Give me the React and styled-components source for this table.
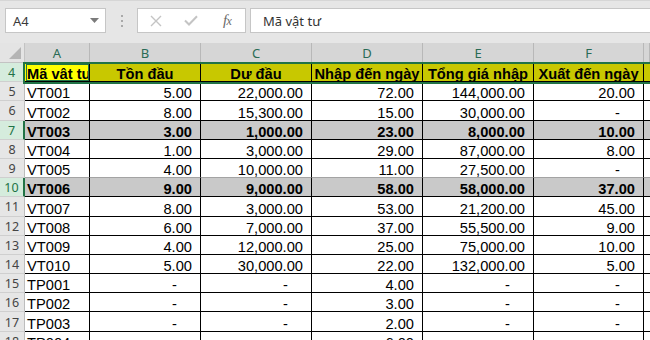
import React from 'react';
import styled, { createGlobalStyle } from 'styled-components';

const GREEN = '#217346';
const COLS = '25px 65px 111px 111px 111px 111px 110px 1fr';

const GlobalStyle = createGlobalStyle`
  html, body { margin: 0; padding: 0; background: #fff; overflow: hidden; }
  #root { width: 650px; height: 340px; overflow: hidden; }
`;

const Window = styled.div`
  width: 650px;
  height: 340px;
  overflow: hidden;
  display: flex;
  flex-direction: column;
  background: #fff;
`;

const FormulaBar = styled.div`
  height: 43px;
  flex: none;
  box-sizing: border-box;
  background: #e6e6e6;
  border-top: 1px solid #d6d6d6;
  display: flex;
  align-items: flex-start;
  padding: 7px 0 0 5px;
  font-family: "Noto Sans", "Open Sans", sans-serif;
`;

const NameBox = styled.div`
  width: 101px;
  height: 25px;
  box-sizing: border-box;
  border: 1px solid #c6c6c6;
  background: #fff;
  display: flex;
  align-items: center;
  justify-content: space-between;
  padding: 0 6px 0 7px;
  font-size: 13px;
  color: #3a3a3a;
`;

const Grip = styled.div`
  width: 31px;
  height: 25px;
  display: flex;
  flex-direction: column;
  align-items: center;
  justify-content: center;
  gap: 3px;
`;

const Dot = styled.span`
  width: 2px;
  height: 2px;
  background: #a9a9a9;
`;

const FxBox = styled.div`
  width: 109px;
  height: 25px;
  box-sizing: border-box;
  border: 1px solid #c6c6c6;
  background: #fff;
  display: grid;
  grid-template-columns: repeat(3, 1fr);
  align-items: center;
  justify-items: center;
  margin-right: 4px;
`;

const FxLabel = styled.span`
  font-family: "Liberation Serif", serif;
  font-style: italic;
  font-size: 15px;
  color: #6a6a6a;
  letter-spacing: -0.5px;
  & small { font-size: 12px; }
`;

const FormulaInput = styled.div`
  flex: 1;
  height: 25px;
  box-sizing: border-box;
  border: 1px solid #c6c6c6;
  border-right: none;
  background: #fff;
  display: flex;
  align-items: center;
  padding-left: 12px;
  font-size: 13px;
  color: #333;
`;

const Sheet = styled.div`
  position: relative;
  flex: 1;
  overflow: hidden;
`;

const HeaderRow = styled.div`
  display: grid;
  grid-template-columns: ${COLS};
  height: 20px;
`;

const Corner = styled.div`
  position: relative;
  background: #e4e4e4;
  box-sizing: border-box;
  border-right: 1px solid #c3c3c3;
  border-bottom: 1px solid #c3c3c3;
`;

const CornerTriangle = styled.svg`
  position: absolute;
  right: 3px;
  bottom: 3px;
`;

const ColHeader = styled.div`
  background: #d6d6d6;
  box-sizing: border-box;
  border-right: 1px solid #b8b8b8;
  display: flex;
  align-items: center;
  justify-content: center;
  font-family: "Noto Sans", "Open Sans", sans-serif;
  font-size: 13px;
  color: #2a6b55;
  padding-bottom: 1px;
`;

const Row = styled.div`
  display: grid;
  grid-template-columns: ${COLS};
  height: 19.2px;
`;

const RowHeader = styled.div`
  box-sizing: border-box;
  background: ${(p) => (p.$selected ? '#d5ecdd' : '#e6e6e6')};
  color: ${(p) => (p.$selected ? GREEN : '#444')};
  border-bottom: 1px solid #cfcfcf;
  border-right: ${(p) => (p.$selected ? `2px solid ${GREEN}` : '1px solid #bdbdbd')};
  display: flex;
  align-items: center;
  justify-content: center;
  font-family: "Noto Sans", "Open Sans", sans-serif;
  font-size: 12.5px;
  padding-top: 1px;
`;

const Cell = styled.div`
  box-sizing: border-box;
  background: ${(p) => p.$bg || '#fff'};
  border-right: ${(p) => (p.$last ? 'none' : '1px solid #000')};
  border-bottom: 1px solid ${(p) => p.$bottom || '#000'};
  display: flex;
  align-items: flex-end;
  justify-content: ${(p) => (p.$align === 'left' ? 'flex-start' : p.$align === 'center' ? 'center' : 'flex-end')};
  padding: ${(p) =>
    p.$align === 'left' ? '0 0 0 2px' : p.$align === 'center' ? '0' : p.$dash ? '0 23px 0 0' : '0 8px 0 0'};
  font-family: "Liberation Sans", Arial, sans-serif;
  font-size: 14.67px;
  font-weight: ${(p) => (p.$bold ? 700 : 400)};
  line-height: 14px;
  color: #000;
  white-space: nowrap;
  overflow: hidden;
  outline: ${(p) => (p.$active ? `1px solid ${GREEN}` : 'none')};
  outline-offset: -2px;
`;

const Selection = styled.div`
  position: absolute;
  top: 19px;
  left: 23px;
  right: -4px;
  height: 22px;
  box-sizing: border-box;
  border: 2px solid ${GREEN};
  pointer-events: none;
`;

const headers = ['Mã vật tư', 'Tồn đầu', 'Dư đầu', 'Nhập đến ngày', 'Tổng giá nhập', 'Xuất đến ngày'];

const rows = [
  { n: 5, v: ['VT001', '5.00', '22,000.00', '72.00', '144,000.00', '20.00'] },
  { n: 6, v: ['VT002', '8.00', '15,300.00', '15.00', '30,000.00', '-'] },
  { n: 7, v: ['VT003', '3.00', '1,000.00', '23.00', '8,000.00', '10.00'], hl: true },
  { n: 8, v: ['VT004', '1.00', '3,000.00', '29.00', '87,000.00', '8.00'] },
  { n: 9, v: ['VT005', '4.00', '10,000.00', '11.00', '27,500.00', '-'], soft: true },
  { n: 10, v: ['VT006', '9.00', '9,000.00', '58.00', '58,000.00', '37.00'], hl: true },
  { n: 11, v: ['VT007', '8.00', '3,000.00', '53.00', '21,200.00', '45.00'] },
  { n: 12, v: ['VT008', '6.00', '7,000.00', '37.00', '55,500.00', '9.00'] },
  { n: 13, v: ['VT009', '4.00', '12,000.00', '25.00', '75,000.00', '10.00'] },
  { n: 14, v: ['VT010', '5.00', '30,000.00', '22.00', '132,000.00', '5.00'] },
  { n: 15, v: ['TP001', '-', '-', '4.00', '-', '-'] },
  { n: 16, v: ['TP002', '-', '-', '3.00', '-', '-'] },
  { n: 17, v: ['TP003', '-', '-', '2.00', '-', '-'] },
  { n: 18, v: ['TP004', '-', '-', '6.00', '-', '-'] },
];

const CancelIcon = () => (
  <svg width="12" height="12" viewBox="0 0 12 12">
    <path d="M1 1 L11 11 M11 1 L1 11" stroke="#c4c4c4" strokeWidth="1.4" fill="none" />
  </svg>
);

const CheckIcon = () => (
  <svg width="14" height="11" viewBox="0 0 14 11">
    <path d="M1 5.5 L5 9.5 L13 1.2" stroke="#c4c4c4" strokeWidth="2" fill="none" />
  </svg>
);

const Caret = () => (
  <svg width="9" height="5" viewBox="0 0 9 5">
    <path d="M0 0 H9 L4.5 5 Z" fill="#7b7b7b" />
  </svg>
);

export default function App() {
  return (
    <Window>
      <GlobalStyle />
      <FormulaBar>
        <NameBox>
          <span>A4</span>
          <Caret />
        </NameBox>
        <Grip>
          <Dot />
          <Dot />
          <Dot />
        </Grip>
        <FxBox>
          <CancelIcon />
          <CheckIcon />
          <FxLabel>
            f<small>x</small>
          </FxLabel>
        </FxBox>
        <FormulaInput>Mã vật tư</FormulaInput>
      </FormulaBar>
      <Sheet>
        <HeaderRow>
          <Corner>
            <CornerTriangle width="12" height="12" viewBox="0 0 12 12">
              <path d="M12 0 V12 H0 Z" fill="#b5b5b5" />
            </CornerTriangle>
          </Corner>
          {['A', 'B', 'C', 'D', 'E', 'F', ''].map((c, i) => (
            <ColHeader key={i}>{c}</ColHeader>
          ))}
        </HeaderRow>
        <Row>
          <RowHeader $selected>4</RowHeader>
          {headers.map((h, i) => (
            <Cell
              key={i}
              $bg={i === 0 ? '#ffff00' : '#c8c800'}
              $align={i === 0 ? 'left' : 'center'}
              $active={i === 0}
              $bold
            >
              {h}
            </Cell>
          ))}
          <Cell $bg="#c8c800" $last />
        </Row>
        {rows.map((r) => {
          const bg = r.hl ? '#c9c9c9' : '#fff';
          const bottom = r.soft ? '#a3a3a3' : '#000';
          return (
            <Row key={r.n}>
              <RowHeader $selected={r.hl}>{r.n}</RowHeader>
              {r.v.map((val, i) => (
                <Cell
                  key={i}
                  $bg={bg}
                  $bottom={bottom}
                  $bold={r.hl}
                  $align={i === 0 ? 'left' : 'right'}
                  $dash={val === '-'}
                >
                  {val}
                </Cell>
              ))}
              <Cell $bg={bg} $bottom={bottom} $last />
            </Row>
          );
        })}
        <Selection />
      </Sheet>
    </Window>
  );
}
